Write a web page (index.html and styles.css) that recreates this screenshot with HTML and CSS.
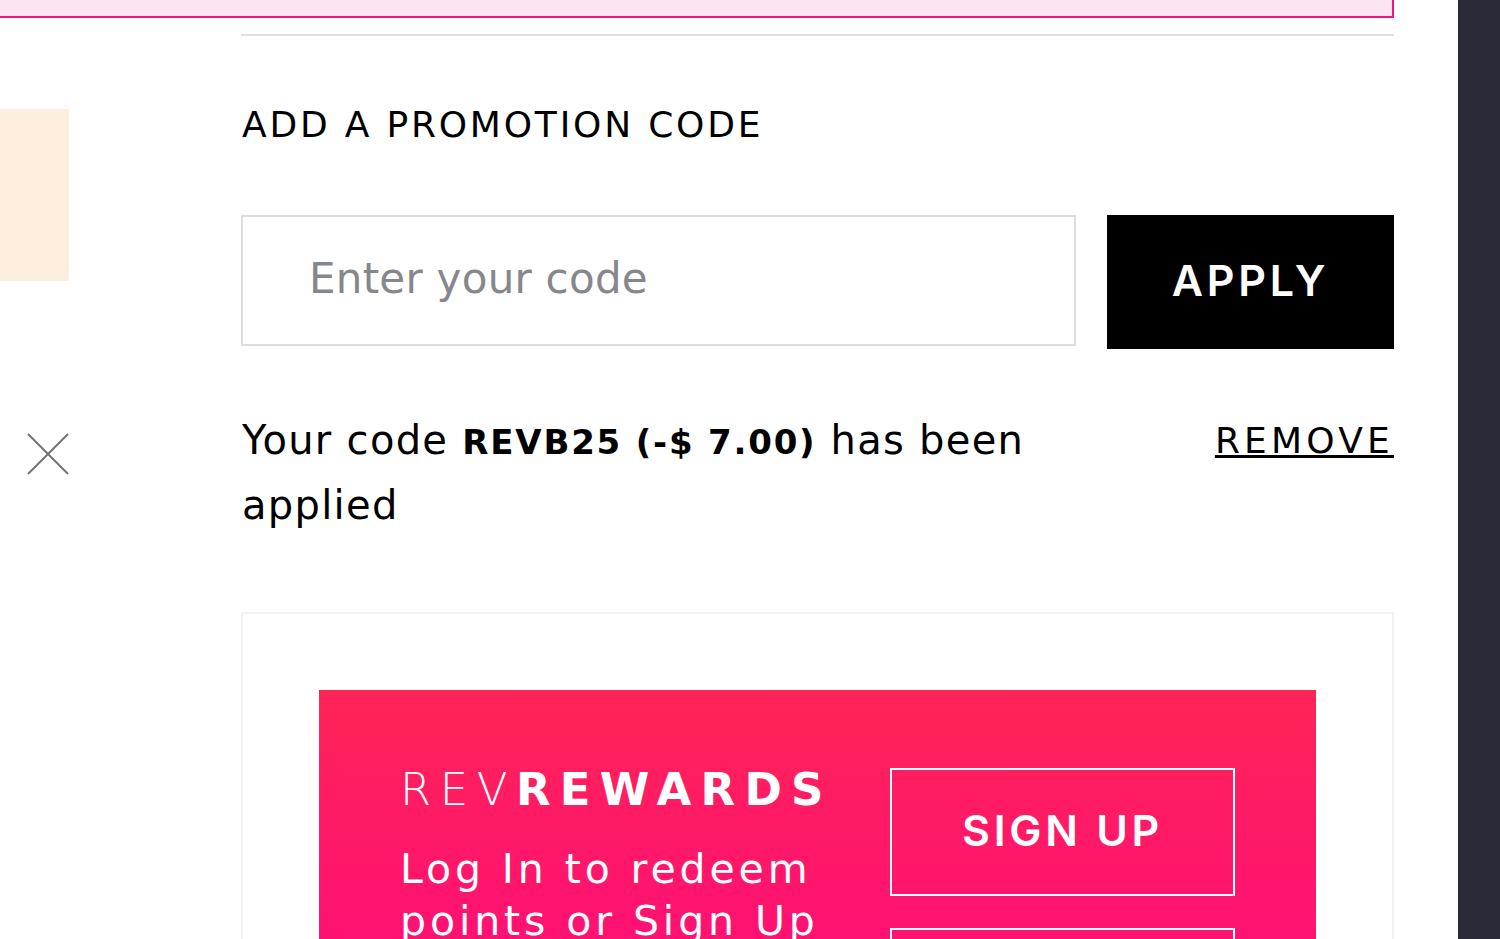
FILE: index.html
```html
<!DOCTYPE html>
<html lang="en">
<head>
<meta charset="utf-8">
<title>Promotion code</title>
<link rel="stylesheet" href="styles.css">
</head>
<body>
<div class="page">
  <main class="content">
    <div class="alert"></div>
    <div class="columns">
      <aside class="side">
        <div class="swatch"></div>
        <svg class="close" viewBox="0 0 42 42" aria-hidden="true"><path d="M1 1L41 41M41 1L1 41"/></svg>
      </aside>
      <section class="promo">
        <hr class="rule">
        <h2 class="promo-title">ADD A PROMOTION CODE</h2>
        <form class="promo-form">
          <input class="promo-input" type="text" placeholder="Enter your code">
          <button class="apply" type="button">APPLY</button>
        </form>
        <div class="applied">
          <p class="applied-text">Your code <strong>REVB25 (-$ 7.00)</strong> has been applied</p>
          <a class="remove" href="#">REMOVE</a>
        </div>
        <div class="rewards-card">
          <div class="rewards">
            <div class="rewards-copy">
              <div class="rewards-logo">REV<b>REWARDS</b></div>
              <p class="rewards-text">Log In to redeem points or Sign Up</p>
            </div>
            <div class="rewards-actions">
              <a class="outline" href="#">SIGN UP</a>
              <a class="outline" href="#">LOG IN</a>
            </div>
          </div>
        </div>
      </section>
    </div>
  </main>
  <div class="rail"></div>
</div>
</body>
</html>
```
FILE: styles.css
```css
* { box-sizing: border-box; }
html, body { margin: 0; height: 939px; overflow: hidden; background: #fff; }
body { font-family: "DejaVu Sans", sans-serif; color: #000; }
.page { display: flex; height: 939px; overflow: hidden; }
.content { flex: 1; min-width: 0; padding-right: 64px; }
.rail { width: 42px; background: #2a2b38; }
.alert { height: 18px; background: #fde4f3; border-right: 2px solid #f0148c; border-bottom: 2px solid #f0148c; }
.columns { display: flex; }
.side { width: 241px; flex: none; padding-top: 91px; }
.swatch { width: 69px; height: 172px; background: #fdeedd; }
.close { display: block; width: 42px; height: 42px; margin: 152px 0 0 27px; }
.close path { fill: none; stroke: #6f7478; stroke-width: 2; }
.promo { flex: 1; min-width: 0; padding-top: 16px; }
.rule { height: 2px; margin: 0; border: 0; background: #e0e0e0; }
.promo-title { margin: 71px 0 0; font-size: 36px; line-height: 36px; font-weight: 400; letter-spacing: 2.8px; padding-left: 1px; }
.promo-form { display: flex; align-items: flex-start; gap: 31px; margin-top: 72px; }
.promo-input { flex: 1; min-width: 0; height: 131px; padding: 0 0 4px 66px; border: 2px solid #ddd; background: #fff; font: 400 42px "DejaVu Sans", sans-serif; letter-spacing: 0.25px; color: #000; outline: none; }
.promo-input::placeholder { color: #85878b; opacity: 1; }
.apply { width: 287px; height: 134px; border: 0; background: #000; color: #fff; font: 600 43px "Inter", sans-serif; letter-spacing: 3.7px; padding: 0 0 4px; }
.applied { display: flex; justify-content: space-between; align-items: flex-start; margin-top: 60px; }
.applied-text { width: 800px; margin: 0; padding-left: 1px; font-size: 40px; line-height: 63px; letter-spacing: 1.3px; color: #000; }
.applied-text strong { font-weight: 700; font-size: 34px; letter-spacing: 1.8px; }
.remove { font-size: 36px; line-height: 63px; color: #000; text-decoration: underline; letter-spacing: 4.2px; }
.rewards-card { margin-top: 75px; height: 400px; padding: 76px; border: 2px solid #f2f2f2; }
.rewards { display: flex; height: 400px; background: linear-gradient(#ff2456, #ff1272 240px); color: #fff; padding: 78px 81px 0 81px; gap: 65px; }
.rewards-copy { width: 425px; flex: none; }
.rewards-logo { font-size: 45px; line-height: 44px; font-weight: 200; letter-spacing: 8.5px; white-space: nowrap; }
.rewards-logo b { font-weight: 700; letter-spacing: 9.2px; }
.rewards-text { margin: 31px 0 0; font-size: 41px; line-height: 52px; letter-spacing: 3.9px; }
.rewards-actions { flex: 1; display: flex; flex-direction: column; gap: 32px; }
.outline { display: flex; align-items: center; justify-content: center; height: 128px; flex: none; padding-bottom: 4px; border: 2px solid #fff; color: #fff; text-decoration: none; font-family: "Inter", sans-serif; font-size: 43px; font-weight: 600; letter-spacing: 3.7px; }
```
